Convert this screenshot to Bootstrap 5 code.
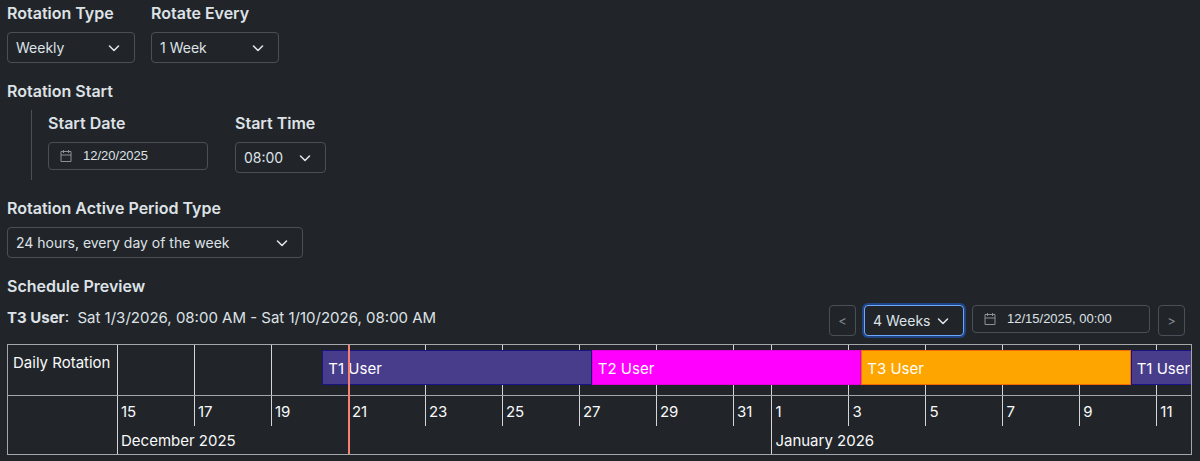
<!DOCTYPE html>
<html lang="en" data-bs-theme="dark">
<head>
<meta charset="utf-8">
<meta name="viewport" content="width=device-width, initial-scale=1">
<title>Rotation schedule</title>
<link href="https://cdn.jsdelivr.net/npm/bootstrap@5.3.0/dist/css/bootstrap.min.css" rel="stylesheet">
<style>
  body { background: #212529; color: #dee2e6; font-family: Inter, "Liberation Sans", sans-serif; font-size: 15px; line-height: 24px; }
  .page { padding: 1px 8px 6px 7px; }
  .heading { display: block; margin: 0 0 7px; font-size: 16px; line-height: 24px; font-weight: 600; color: #dee2e6; }
  .pick { height: 31px; padding: 0 32px 0 8px; font-size: 14px; line-height: 20px; color: #dee2e6; background-color: #212529; border: 1px solid #495057; border-radius: 4px;
    background-image: url("data:image/svg+xml,%3csvg xmlns='http://www.w3.org/2000/svg' viewBox='0 0 12 12'%3e%3cpath fill='none' stroke='%23dee2e6' stroke-width='1.6' stroke-linecap='round' stroke-linejoin='round' d='M1.5 4 6 8.5 10.500 4'/%3e%3c/svg%3e");
    background-size: 12px 12px; background-position: right 14px center; }
  .pick-md { width: 128px; }
  .pick-time { width: 91px; }
  .pick-wide { width: 296px; }
  .pick-span { width: 100px; }
  .pick-active { border-color: #6ea8fe; box-shadow: 0 0 0 2px #1f4587; }
  .date-field { height: 28px; padding: 0 10px; background: #212529; border: 1px solid #495057; border-radius: 4px; }
  .date-field svg { flex: none; color: #8b9197; }
  .date-field input { min-width: 0; margin-left: 10px; padding: 0; border: 0; outline: 0; background: transparent; color: #dee2e6; font-family: "Liberation Sans", Arial, sans-serif; font-size: 13px; line-height: 20px; }
  .date-day { width: 160px; }
  .date-time { width: 178px; }
  .start-group { margin: 0 0 16px 24px; padding: 1px 0 7px 16px; gap: 27px; border-left: 1px solid #495057; }
  .step-btn { width: 27px; height: 31px; padding: 0; color: #868c92; background: #212529; border: 1px solid #495057; border-radius: 4px; font-size: 13px; line-height: 20px; }
  .shift-info { padding-top: 1px; }
  .preview-controls { padding-right: 7px; }
  .timeline { display: grid; grid-template-columns: 109px minmax(0, 1fr); border: 1px solid #a5a8aa; color: #f8f9fa; }
  .row-name { height: 51px; padding: 6px 5px 0; border-bottom: 1px solid #a5a8aa; white-space: nowrap; }
  .plot { position: relative; overflow: hidden; border-bottom: 1px solid #a5a8aa; }
  .axis { overflow: hidden; height: 58px; }
  .axis-months { display: grid; grid-template-columns: 17fr 10.9fr; }
  .axis-days, .plot-days { display: grid; grid-template-columns: repeat(8, 2fr) 1fr repeat(5, 2fr) 0.9fr; }
  .plot-days { height: 100%; }
  .axis-days > *, .plot-days > *, .axis-months > * { min-width: 0; border-left: 1px solid #d3d5d6; }
  .axis-days > * { height: 30px; padding: 4px 0 0 3px; }
  .axis-months > * { height: 28px; padding: 3px 0 0 3px; }
  .shift { position: absolute; top: 5px; height: 35px; padding: 0 5px; line-height: 35px; border: 1px solid; color: #fff; white-space: nowrap; overflow: hidden; }
  .shift-t1 { background: #483d8b; border-color: #1a1384; }
  .shift-t2 { background: #f0f; border-color: #e200dc; }
  .shift-t3 { background: #ffa500; border-color: #f26a00; }
  .now-line { position: absolute; top: 0; bottom: 0; width: 2px; background: #fa8072; }
  .now-track { position: absolute; inset: 0 0 0 109px; pointer-events: none; }
</style>
</head>
<body>
<main class="page">
  <div class="d-flex flex-wrap gap-3 mb-3">
    <div>
      <label class="heading" for="type">Rotation Type</label>
      <select class="form-select pick pick-md" id="type"><option>Weekly</option></select>
    </div>
    <div>
      <label class="heading" for="every">Rotate Every</label>
      <select class="form-select pick pick-md" id="every"><option>1 Week</option></select>
    </div>
  </div>

  <h2 class="heading">Rotation Start</h2>
  <div class="start-group d-flex flex-wrap">
    <div>
      <label class="heading" for="startDate">Start Date</label>
      <div class="date-field date-day d-flex align-items-center">
        <svg width="14" height="14" viewBox="0 0 14 14" fill="none" stroke="currentColor" aria-hidden="true"><path d="M2 2.500h10v10H2zM2 6h10M4.500 1v3M9.500 1v3"/></svg>
        <input class="flex-grow-1" id="startDate" type="text" value="12/20/2025">
      </div>
    </div>
    <div>
      <label class="heading" for="startTime">Start Time</label>
      <select class="form-select pick pick-time" id="startTime"><option>08:00</option></select>
    </div>
  </div>

  <label class="heading" for="period">Rotation Active Period Type</label>
  <select class="form-select pick pick-wide mb-3" id="period"><option>24 hours, every day of the week</option></select>

  <h2 class="heading">Schedule Preview</h2>
  <div class="d-flex flex-wrap justify-content-between mb-2">
    <div class="shift-info"><strong>T3 User</strong>:&nbsp; Sat 1/3/2026, 08:00 AM - Sat 1/10/2026, 08:00 AM</div>
    <div class="preview-controls d-flex gap-2">
      <button class="btn step-btn" type="button" aria-label="Previous period">&lt;</button>
      <select class="form-select pick pick-span pick-active" aria-label="Preview length"><option>4 Weeks</option></select>
      <div class="date-field date-time d-flex align-items-center">
        <svg width="14" height="14" viewBox="0 0 14 14" fill="none" stroke="currentColor" aria-hidden="true"><path d="M2 2.500h10v10H2zM2 6h10M4.500 1v3M9.500 1v3"/></svg>
        <input class="flex-grow-1" type="text" value="12/15/2025, 00:00" aria-label="Preview start">
      </div>
      <button class="btn step-btn" type="button" aria-label="Next period">&gt;</button>
    </div>
  </div>

  <div class="timeline position-relative">
    <div class="row-name">Daily Rotation</div>
    <div class="plot">
      <div class="plot-days"><i></i><i></i><i></i><i></i><i></i><i></i><i></i><i></i><i></i><i></i><i></i><i></i><i></i><i></i><i></i></div>
      <div class="shift shift-t1" style="left:19.12%;width:25.09%">T1 User</div>
      <div class="shift shift-t2" style="left:44.21%;width:25.09%">T2 User</div>
      <div class="shift shift-t3" style="left:69.30%;width:25.09%">T3 User</div>
      <div class="shift shift-t1" style="left:94.38%;width:25.09%">T1 User</div>
    </div>
    <div></div>
    <div class="axis">
      <div class="axis-days"><div>15</div><div>17</div><div>19</div><div>21</div><div>23</div><div>25</div><div>27</div><div>29</div><div>31</div><div>1</div><div>3</div><div>5</div><div>7</div><div>9</div><div>11</div></div>
      <div class="axis-months"><div>December 2025</div><div>January 2026</div></div>
    </div>
    <div class="now-track"><div class="now-line" style="left:21.50%"></div></div>
  </div>
</main>
<script src="https://cdn.jsdelivr.net/npm/bootstrap@5.3.0/dist/js/bootstrap.bundle.min.js"></script>
</body>
</html>
